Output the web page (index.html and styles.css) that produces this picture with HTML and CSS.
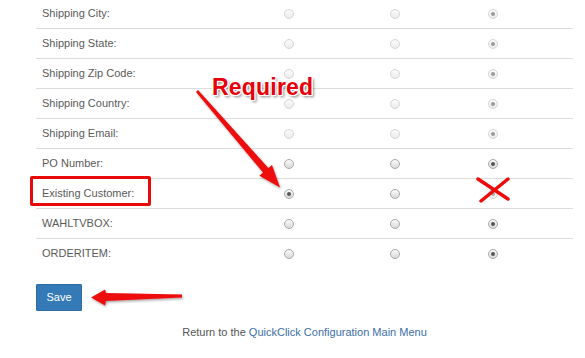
FILE: index.html
```html
<!DOCTYPE html>
<html>
<head>
<meta charset="utf-8">
<link rel="stylesheet" href="styles.css">
</head>
<body>
<div class="page">
  <div class="table">
    <div class="row"><div class="label">Shipping City:</div><div class="cell"><span class="radio dis"></span></div><div class="cell"><span class="radio dis"></span></div><div class="cell"><span class="radio dis on"></span></div></div>
    <div class="row"><div class="label">Shipping State:</div><div class="cell"><span class="radio dis"></span></div><div class="cell"><span class="radio dis"></span></div><div class="cell"><span class="radio dis on"></span></div></div>
    <div class="row"><div class="label">Shipping Zip Code:</div><div class="cell"><span class="radio dis"></span></div><div class="cell"><span class="radio dis"></span></div><div class="cell"><span class="radio dis on"></span></div></div>
    <div class="row"><div class="label">Shipping Country:</div><div class="cell"><span class="radio dis"></span></div><div class="cell"><span class="radio dis"></span></div><div class="cell"><span class="radio dis on"></span></div></div>
    <div class="row"><div class="label">Shipping Email:</div><div class="cell"><span class="radio dis"></span></div><div class="cell"><span class="radio dis"></span></div><div class="cell"><span class="radio dis on"></span></div></div>
    <div class="row"><div class="label">PO Number:</div><div class="cell"><span class="radio"></span></div><div class="cell"><span class="radio"></span></div><div class="cell"><span class="radio on"></span></div></div>
    <div class="row"><div class="label">Existing Customer:</div><div class="cell"><span class="radio on"></span></div><div class="cell"><span class="radio"></span></div><div class="cell"><span class="radio on faint"></span></div></div>
    <div class="row"><div class="label">WAHLTVBOX:</div><div class="cell"><span class="radio"></span></div><div class="cell"><span class="radio"></span></div><div class="cell"><span class="radio on"></span></div></div>
    <div class="row"><div class="label">ORDERITEM:</div><div class="cell"><span class="radio"></span></div><div class="cell"><span class="radio"></span></div><div class="cell"><span class="radio on"></span></div></div>
  </div>
  <div class="actions"><button class="btn">Save</button></div>
  <p class="footer">Return to the <a href="#" class="link">QuickClick Configuration Main Menu</a></p>

  <div class="hl-box"></div>
  <div class="required">Required</div>
  <svg class="overlay" width="585" height="358" viewBox="0 0 585 358">
    <defs>
      <filter id="sh" x="-20%" y="-20%" width="140%" height="140%">
        <feDropShadow dx="1" dy="1.5" stdDeviation="1.2" flood-color="#000" flood-opacity="0.35"/>
      </filter>
    </defs>
    <polygon filter="url(#sh)" fill="#ee0a0a" points="196,93.9 198,92.1 268.4,170 272,167 280,189.5 259.4,177.8 263,174.6"/>
    <polygon filter="url(#sh)" fill="#ee0a0a" points="182,296.6 106,295 105,291.5 91,299.5 105,307.5 106,303 182,299.4"/>
    <g stroke="#ee0a0a" stroke-width="3.5" stroke-linecap="round">
      <line x1="478" y1="181" x2="508" y2="201"/>
      <line x1="508" y1="181" x2="481" y2="203"/>
    </g>
  </svg>
</div>
</body>
</html>
```

FILE: styles.css
```css
* { box-sizing: border-box; }
html, body { margin: 0; padding: 0; background: #fff; }
body {
  font-family: "Liberation Sans", Arial, sans-serif;
  font-size: 11px;
  color: #555;
  width: 585px;
  height: 358px;
  overflow: hidden;
}
.page {
  position: relative;
  width: 585px;
  height: 358px;
  padding-left: 36px;
  padding-right: 12px;
}
.table {
  margin-top: -2px;
  width: 537px;
}
.row {
  display: grid;
  grid-template-columns: 248px 106px 98px 1fr;
  align-items: center;
  height: 30px;
  border-top: 1px solid #dcdcdc;
}
.label {
  padding-left: 6px;
  line-height: 13px;
  color: #5a5a5a;
}
.cell {
  display: flex;
  align-items: center;
}
.radio {
  display: block;
  width: 10px;
  height: 10px;
  border-radius: 50%;
  border: 1px solid #a9a9a9;
  background: linear-gradient(#fafafa, #d9d9d9);
  position: relative;
}
.radio.dis {
  border-color: #d6d6d6;
  background: linear-gradient(#fbfbfb, #ececec);
}
.radio.on::after {
  content: "";
  position: absolute;
  left: 2px;
  top: 2px;
  width: 4px;
  height: 4px;
  border-radius: 50%;
  background: #555;
}
.radio.dis.on::after { background: #9a9a9a; }
.radio.faint { opacity: 0.5; }
.actions {
  margin-top: 16px;
}
.btn {
  display: block;
  width: 46px;
  height: 27px;
  padding: 0;
  border: 1px solid #2e6da4;
  border-radius: 1px;
  background: #337ab7;
  color: #fff;
  font-family: "Liberation Sans", Arial, sans-serif;
  font-size: 11px;
  line-height: 13px;
}
.footer {
  margin: 15px 0 0 0;
  width: 537px;
  text-align: center;
  line-height: 13px;
  color: #555;
}
.link {
  color: #3c6ea6;
  text-decoration: none;
}
.hl-box {
  position: absolute;
  left: 30px;
  top: 178px;
  width: 121px;
  height: 30px;
  border: 3px solid #e80a0a;
  border-radius: 2px;
}
.required {
  position: absolute;
  left: 212px;
  top: 75px;
  font-family: "Liberation Sans", Arial, sans-serif;
  font-weight: bold;
  font-size: 23px;
  letter-spacing: 0.2px;
  line-height: 28px;
  color: #e8000b;
  text-shadow:
    1px 0 0 #fff, -1px 0 0 #fff, 0 1px 0 #fff, 0 -1px 0 #fff,
    1px 1px 0 #fff, -1px -1px 0 #fff, 1px -1px 0 #fff, -1px 1px 0 #fff,
    2px 2px 3px rgba(0,0,0,0.55);
}
.overlay {
  position: absolute;
  left: 0;
  top: 0;
  pointer-events: none;
}
```
